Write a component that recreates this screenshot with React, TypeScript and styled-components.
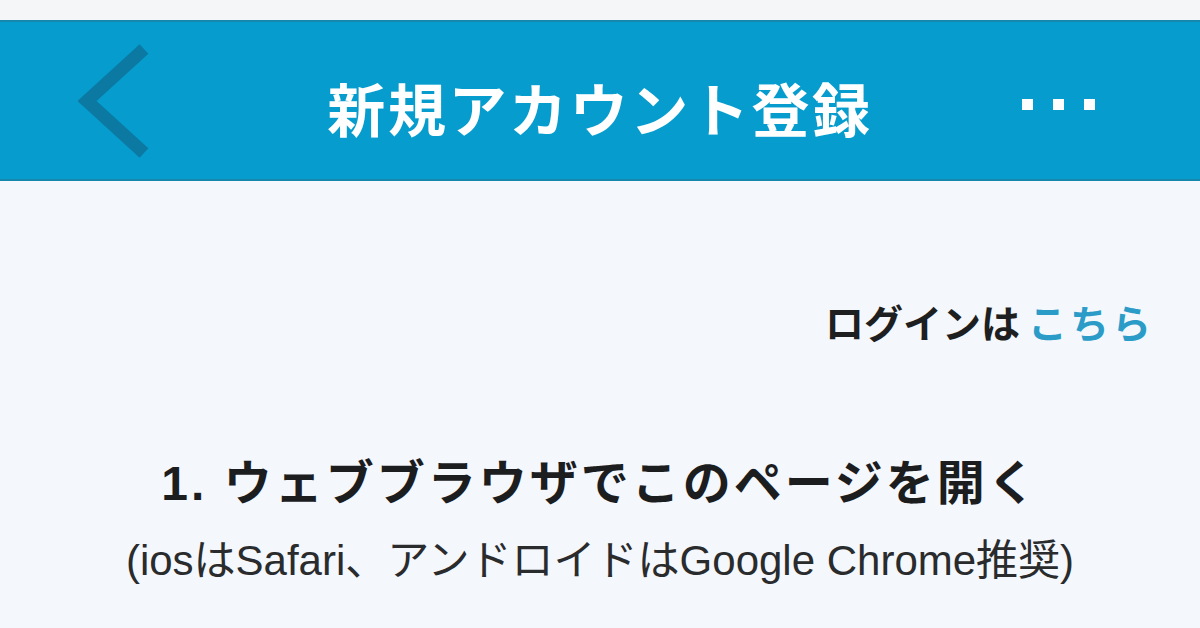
import React from "react";
import styled, { createGlobalStyle } from "styled-components";

const Global = createGlobalStyle`
  html, body { margin: 0; padding: 0; }
  body {
    background: #f4f7fc;
    font-family: "Liberation Sans", "Noto Sans CJK JP", sans-serif;
    width: 1200px;
    height: 628px;
    overflow: hidden;
  }
`;

const Page = styled.div`
  width: 1200px;
  height: 628px;
  display: flex;
  flex-direction: column;
  background: #f4f7fc;
`;

const TopStrip = styled.div`
  height: 20px;
  background: #f5f6f8;
`;

const Header = styled.header`
  height: 161px;
  box-sizing: border-box;
  background: #069ccd;
  border-top: 2px solid #1687ad;
  border-bottom: 2px solid #1687ad;
  display: grid;
  grid-template-columns: 200px 1fr 200px;
  align-items: center;
`;

const BackButton = styled.div`
  display: flex;
  align-items: center;
  padding-left: 78px;
  height: 100%;
`;

const Title = styled.h1`
  margin: 0;
  text-align: center;
  color: #ffffff;
  font-family: "Noto Sans CJK JP", sans-serif;
  font-weight: 700;
  font-size: 58px;
  letter-spacing: 2.6px;
  line-height: 1;
  padding-top: 12px;
`;

const Dots = styled.div`
  display: flex;
  justify-content: flex-end;
  gap: 20px;
  padding-right: 105px;
  padding-top: 8px;
`;

const Dot = styled.span`
  width: 11px;
  height: 11px;
  background: #ffffff;
  display: block;
`;

const Body = styled.main`
  display: flex;
  flex-direction: column;
  padding: 0 46px;
`;

const LoginRow = styled.div`
  display: flex;
  justify-content: flex-end;
  padding-top: 116px;
  font-family: "Noto Sans CJK JP", sans-serif;
  font-weight: 700;
  font-size: 39px;
  line-height: 48px;
  color: #1e1f21;
`;

const Link = styled.span`
  color: #2b9cc8;
  margin-left: 8px;
  letter-spacing: 3px;
`;

const Heading = styled.h2`
  margin: 0;
  padding-top: 111px;
  text-align: center;
  font-family: "Liberation Sans", "Noto Sans CJK JP", sans-serif;
  font-weight: 700;
  font-size: 48px;
  line-height: 56px;
  color: #1c1d1f;
  letter-spacing: 3px;
`;

const Note = styled.p`
  margin: 0;
  padding-top: 25px;
  text-align: center;
  font-family: "Liberation Sans", "Noto Sans CJK JP", sans-serif;
  font-weight: 400;
  font-size: 42px;
  line-height: 48px;
  color: #2a2b2d;
`;

export default function App() {
  return (
    <>
      <Global />
      <Page>
        <TopStrip />
        <Header>
          <BackButton>
            <svg width="76" height="116" viewBox="0 0 76 116">
              <polyline
                points="66,6 9,58 66,110"
                fill="none"
                stroke="#0c79a3"
                strokeWidth="13"
                strokeLinecap="butt"
                strokeLinejoin="miter"
              />
            </svg>
          </BackButton>
          <Title>新規アカウント登録</Title>
          <Dots>
            <Dot />
            <Dot />
            <Dot />
          </Dots>
        </Header>
        <Body>
          <LoginRow>
            ログインは<Link>こちら</Link>
          </LoginRow>
          <Heading>1. ウェブブラウザでこのページを開く</Heading>
          <Note>(iosはSafari、アンドロイドはGoogle Chrome推奨)</Note>
        </Body>
      </Page>
    </>
  );
}
